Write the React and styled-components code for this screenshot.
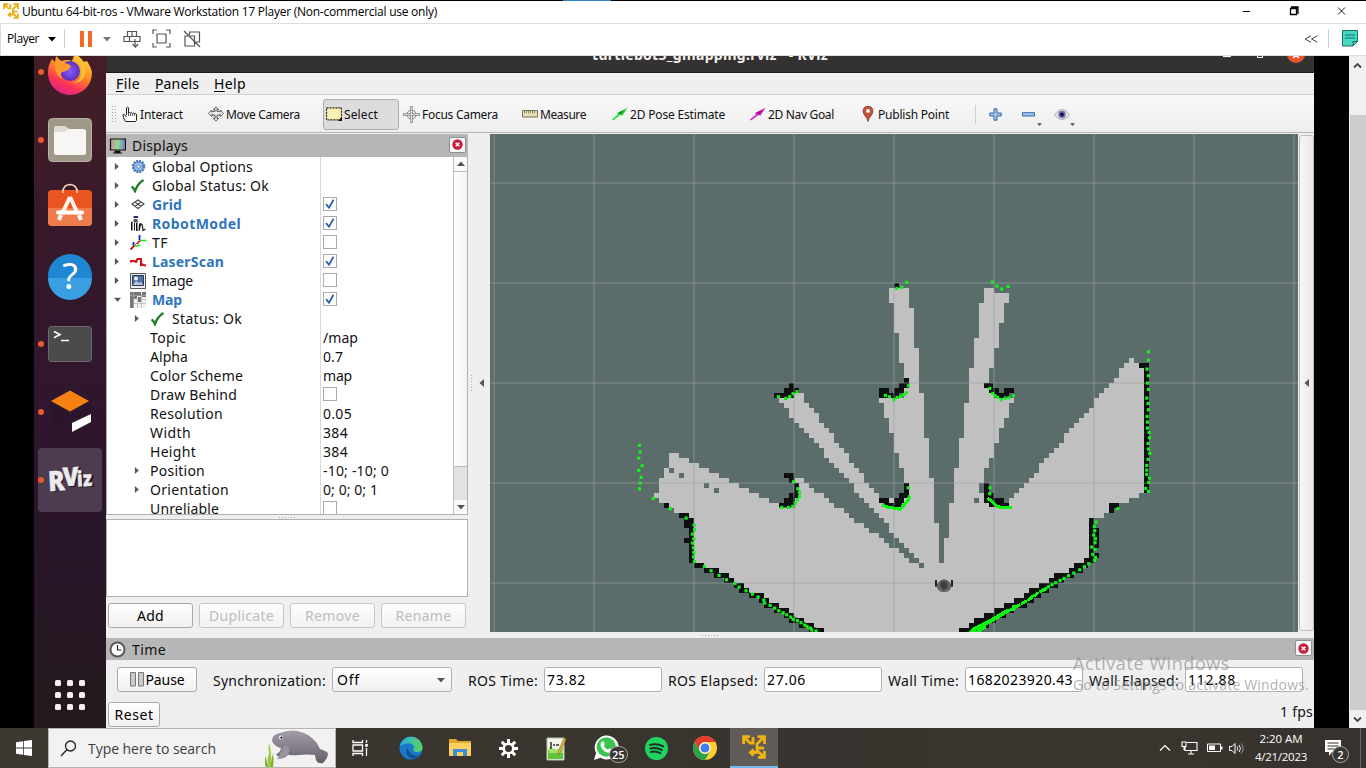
import React, { useLayoutEffect, useRef } from 'react';
import styled, { createGlobalStyle, css } from 'styled-components';

const Global = createGlobalStyle`
  * { box-sizing: border-box; }
  body { margin: 0; background: #000; overflow: hidden; }
  svg { display: block; flex: none; }
`;
const uiFont = '"Open Sans", "Noto Sans", sans-serif';
const ubuntuFont = '"Noto Sans", "Open Sans", sans-serif';

/* Text tracked to a given line width */
const FitBox = styled.span`
  display: block;
  flex: none;
  width: ${p => p.$w}px;
  white-space: nowrap;
`;
function Fit({ w, children, ...rest }) {
  const ref = useRef(null);
  useLayoutEffect(() => {
    const el = ref.current;
    el.style.letterSpacing = '0px';
    const natural = el.getBoundingClientRect().width;
    el.style.letterSpacing = `${(w - natural) / el.textContent.length}px`;
  }, [w, children]);
  return <FitBox $w={w} {...rest}><span ref={ref}>{children}</span></FitBox>;
}

/* ---------- Host window ---------- */
const Desktop = styled.div`
  position: relative;
  width: 1366px;
  height: 768px;
  display: flex;
  flex-direction: column;
  overflow: hidden;
  font-family: ${uiFont};
  font-size: 12px;
  color: #000;
`;
const TitleBar = styled.div`
  height: 24px;
  background: #fff;
  border-top: 1px solid #000;
  border-bottom: 1px solid #dcdcdc;
  display: flex;
  align-items: center;
  padding: 0 0 2px 3px;
  gap: 3px;
`;
const Accent = styled.div`
  position: absolute;
  left: 563px;
  top: 0;
  width: 48px;
  height: 1px;
  background: #2f7fc4;
`;
const WindowButtons = styled.div`
  margin-left: auto;
  display: flex;
  gap: 37px;
  padding-right: 20px;
`;
const PlayerBar = styled.div`
  height: 32px;
  background: #fff;
  border-bottom: 1px solid #dcdcdc;
  border-left: 1px solid #dcdcdc;
  display: flex;
  align-items: center;
  padding: 0 0 2px 6px;
`;
const BarRule = styled.i`
  width: 1px;
  height: 19px;
  background: #cfcfcf;
  margin: 0 ${p => p.$r}px 0 ${p => p.$l}px;
`;
const Slot = styled.span`
  width: ${p => p.$w}px;
  flex: none;
  display: flex;
  align-items: center;
  justify-content: center;
  padding-top: ${p => p.$drop || 0}px;
`;
const Spring = styled.span`flex: 1;`;
const Guest = styled.div`
  height: 672px;
  display: flex;
  background: #000;
`;
const LeftMargin = styled.div`width: 34px;`;
const HostScroll = styled.div`
  width: 17px;
  margin-left: auto;
  background: #f0f0f0;
  display: flex;
  flex-direction: column;
  align-items: center;
  padding: 6px 0 5px;
`;
const HostThumb = styled.div`
  width: 16px;
  height: 595px;
  margin-top: 46px;
  margin-bottom: 6px;
  background: #cdcdcd;
`;

/* ---------- Ubuntu dock ---------- */
const Dock = styled.div`
  width: 72px;
  display: flex;
  flex-direction: column;
  align-items: center;
  overflow: hidden;
  background: linear-gradient(#441e26, #33182c 35%, #2f162e 55%, #271627 78%, #241a1d);
`;
const DockItem = styled.div`
  position: relative;
  flex: none;
  width: 64px;
  height: 64px;
  margin-bottom: 4px;
  border-radius: 4px;
  display: flex;
  align-items: center;
  justify-content: center;
  background: ${p => (p.$active ? '#4f3b4f' : 'transparent')};
  svg { overflow: visible; }
  &:first-child { margin-top: -16px; }
`;
const Running = styled.i`
  position: absolute;
  left: 0;
  top: 29px;
  width: 6px;
  height: 6px;
  border-radius: 50%;
  background: #e95a2b;
`;
const AppGrid = styled.div`
  margin: auto 0 18px;
  display: grid;
  grid-template-columns: repeat(3, 6px);
  gap: 6px;
  i { width: 6px; height: 6px; border-radius: 1.5px; background: #f3eff2; }
`;

/* ---------- RViz ---------- */
const Rviz = styled.div`
  width: 1208px;
  background: #efefef;
  display: flex;
  flex-direction: column;
  font-family: ${ubuntuFont};
  font-size: 14px;
  color: #111;
`;
const RvizTitle = styled.div`
  position: relative;
  height: 17px;
  background: #343132;
  border-bottom: 1px solid #1d1b1b;
  overflow: hidden;
  color: #f4f2f0;
  font-weight: 700;
  font-size: 14px;
  display: flex;
  line-height: 18px;
  padding-left: 486px;
  > * { margin-top: -10px; }
`;
const RvizTitleButtons = styled.div`
  && { margin: 0 9px 0 auto; }
`;
const MenuBar = styled.div`
  height: 22px;
  border-bottom: 1px solid #d0d0d0;
  display: flex;
  align-items: center;
  gap: 15px;
  padding-left: 10px;
  color: #000;
  u { text-underline-offset: 2px; }
`;
const ToolBar = styled.div`
  height: 38px;
  border-bottom: 1px solid #b5b5b5;
  background: linear-gradient(#f9f9f9, #eeeeee);
  display: flex;
  align-items: center;
  padding: 1px 0 0 5px;
  font-size: 12px;
`;
const Tool = styled.div`
  width: ${p => p.$w}px;
  height: 31px;
  display: flex;
  align-items: center;
  gap: 2px;
  padding-left: ${p => p.$pad || 0}px;
  ${p => p.$active && css`
    background: #dcdcdc;
    border: 1px solid #adadad;
    border-radius: 3px;
    padding-left: 2px;
  `}
`;
const ToolSep = styled.i`
  width: 1px;
  height: 19px;
  background: #cfcfcf;
`;
const Grip = styled.i`
  flex: none;
  width: ${p => p.$w}px;
  height: ${p => p.$h}px;
  background-image: radial-gradient(circle, #aaa 0.6px, transparent 0.9px);
  background-size: 3px 3px;
`;
const Work = styled.div`
  height: 499px;
  display: flex;
  padding-top: 1px;
`;
const DockPanel = styled.div`
  width: 362px;
  display: flex;
  flex-direction: column;
`;
const PanelHead = styled.div`
  height: ${p => p.$h}px;
  background: #b6b6b6;
  display: flex;
  align-items: center;
  gap: 6px;
  padding: 0 2px 0 3px;
  flex: none;
`;
const CloseBox = styled.div`
  margin: 0 0 2px auto;
  width: 17px;
  height: 16px;
  border: 1px solid #8f8f8f;
  border-radius: 2px;
  background: #f7f7f7;
  display: flex;
  align-items: center;
  justify-content: center;
`;
const TreeFrame = styled.div`
  height: 358px;
  background: #fff;
  border: 1px solid #b3aeb2;
  border-top: 0;
  display: flex;
  overflow: hidden;
`;
const Rows = styled.div`flex: 1;`;
const Row = styled.div`
  height: 19px;
  display: flex;
`;
const NameCell = styled.div`
  width: 214px;
  border-right: 1px solid #d9d9d9;
  display: flex;
  align-items: center;
  padding-left: ${p => p.$depth * 20}px;
  ${p => p.$on && css`
    color: #2f75bd;
    font-weight: 700;
  `}
  > ${FitBox} { margin-left: 3px; }
`;
const ValueCell = styled.div`
  display: flex;
  align-items: center;
  padding-left: 2px;
`;
const Check = styled.span`
  width: 14px;
  height: 14px;
  margin-bottom: 2px;
  border: 1px solid #aaa;
  background: #fff;
  display: flex;
  align-items: center;
  justify-content: center;
`;
const TreeScroll = styled.div`
  width: 14px;
  border-left: 1px solid #bcbcbc;
  background: #e2e2e2;
  display: flex;
  flex-direction: column;
`;
const ScrollEnd = styled.div`
  height: 14px;
  background: #fafafa;
  display: flex;
  align-items: center;
  justify-content: center;
`;
const ScrollHandle = styled.div`
  height: 297px;
  margin-bottom: 33px;
  background: linear-gradient(90deg, #fff, #f3f3f3);
  border: solid #bcbcbc;
  border-width: 1px 0;
`;
const Splitter = styled.div`
  height: ${p => p.$h}px;
  flex: none;
  display: flex;
  align-items: center;
  justify-content: center;
`;
const Describe = styled.div`
  height: 78px;
  background: #fff;
  border: 1px solid #b3aeb2;
`;
const Buttons = styled.div`
  display: flex;
  gap: 6px;
  padding: 6px 2px 0;
`;
const Button = styled.div`
  width: ${p => p.$w}px;
  height: 25px;
  border: 1px solid ${p => (p.$off ? '#c6c6c6' : '#a9a9a9')};
  border-radius: 3px;
  background: linear-gradient(#fefefe, #f1f1f1);
  color: ${p => (p.$off ? '#bdbdbd' : '#000')};
  display: flex;
  align-items: center;
  justify-content: center;
  gap: 2px;
  flex: none;
`;
const Collapse = styled.div`
  width: ${p => p.$w}px;
  display: flex;
  align-items: center;
  justify-content: space-between;
  padding: 0 4px 0 2px;
`;
const RightStrip = styled.div`
  width: 15px;
  margin: 1px 0 0 1px;
  height: 496px;
  border: 1px solid #bdbdbd;
  border-radius: 3px;
  background: linear-gradient(90deg, #f6f6f6, #e9e9e9);
  display: flex;
  align-items: center;
  justify-content: center;
`;
const TimeRow = styled.div`
  height: 40px;
  display: flex;
  align-items: center;
  padding: 0 0 1px 11px;
`;
const TimeLabel = styled.div`
  margin-left: ${p => p.$l}px;
  margin-right: 6px;
  padding-top: 2px;
`;
const Field = styled.div`
  width: ${p => p.$w}px;
  height: 25px;
  border: 1px solid #b0b0b0;
  border-radius: 3px;
  background: ${p => (p.$combo ? 'linear-gradient(#fefefe, #f0f0f0)' : '#fff')};
  display: flex;
  align-items: center;
  justify-content: space-between;
  padding: 0 6px 0 ${p => (p.$combo ? 4 : 2)}px;
  flex: none;
  color: #000;
`;
const StatusRow = styled.div`
  height: 28px;
  display: flex;
  align-items: center;
  justify-content: space-between;
  padding: 0 1px 0 2px;
  > ${FitBox} { margin-bottom: 6px; }
`;
const Watermark = styled.div`
  position: absolute;
  left: 1073px;
  top: 652px;
  color: rgba(140, 140, 140, 0.68);
  font-size: 18px;
  line-height: 22px;
  div { font-size: 14px; }
`;

/* ---------- Taskbar ---------- */
const Taskbar = styled.div`
  height: 40px;
  background: linear-gradient(90deg, #3c382f, #38332e 60%, #3a352d 80%, #37322e);
  display: flex;
  align-items: center;
  color: #fff;
`;
const Search = styled.div`
  width: 288px;
  height: 40px;
  background: #f2f2f2;
  border: 1px solid #b6b4b0;
  display: flex;
  align-items: center;
  padding: 0 6px 0 11px;
  gap: 11px;
  color: #3d3d3d;
  font-size: 14px;
`;
const Task = styled.div`
  position: relative;
  width: ${p => p.$w || 48}px;
  height: 40px;
  display: flex;
  align-items: center;
  justify-content: center;
  ${p => p.$active && css`
    background: #5f5b57;
    border-bottom: 2px solid #76b9ed;
  `}
`;
const Badge = styled.span`
  position: absolute;
  left: ${p => p.$x}px;
  top: ${p => p.$y}px;
  min-width: 17px;
  height: 17px;
  padding: 0 2px;
  border: 1px solid #a9a7a4;
  border-radius: 9px;
  background: #3a3733;
  font-size: 11px;
  font-weight: 600;
  line-height: 15px;
  text-align: center;
`;
const Tray = styled.div`
  margin-left: auto;
  display: flex;
  align-items: center;
  height: 40px;
  border-right: 1px solid #6b6864;
  margin-right: 5px;
`;
const Clock = styled.div`
  width: 66px;
  display: flex;
  flex-direction: column;
  align-items: center;
  line-height: 18px;
  font-size: 11.5px;
`;

/* ---------- Icons ---------- */
const VmLogo = ({ s = 16, c = '#e8b013' }) => (
  <svg width={s} height={s} viewBox="0 0 24 24" fill="none" stroke={c} strokeWidth="2.800">
    <path d="M1.600 9V1.600H8M1.600 1.600L8 8h4.500M11 2v6M15.500 1.600h7V9M22.400 1.600L15 9v4h7M22.400 16v6.400H16M22.400 22.400L15 15.500V13M8.500 17.500h7M11.500 14.500l-3 3 3 3" />
  </svg>
);
const Tri = ({ dir = 'down', s = 7, c = '#555' }) => {
  const d = { down: 'M0 2h8L4 6.500z', up: 'M0 6h8L4 1.500z', right: 'M1 0v8l4.500-4z', left: 'M6 0v8L1.500 4z' }[dir];
  return <svg width={s} height={s} viewBox="0 0 8 8"><path d={d} fill={c} /></svg>;
};
const CloseDot = () => (
  <svg width="11" height="11" viewBox="0 0 11 11"><circle cx="5.500" cy="5.500" r="5.200" fill="#c5203f" /><path d="M3.700 3.700l3.600 3.600M7.300 3.700L3.700 7.300" stroke="#fff" strokeWidth="1.400" /></svg>
);
const CheckMark = () => (
  <svg width="10" height="10" viewBox="0 0 10 10"><path d="M1 5.200l3 3.500L8.500.7" fill="none" stroke="#2b63a8" strokeWidth="1.800" /></svg>
);

const treeIcons = {
  gear: <svg width="15" height="15" viewBox="0 0 16 16"><circle cx="8" cy="8" r="6" fill="#8fb2de" stroke="#4a78b5" strokeWidth="2.500" strokeDasharray="2 1.140" /><circle cx="8" cy="8" r="4.600" fill="#a9c5e8" stroke="#4f7db8" strokeWidth=".8" /><path d="M8 4v8M4 8h8" stroke="#6e97cb" /><circle cx="8" cy="8" r="1.800" fill="#fff" stroke="#4f7db8" /></svg>,
  ok: <svg width="16" height="14" viewBox="0 0 16 14"><path d="M1.500 7.500q2 1 3.500 4.500Q8 4 13.500 1" fill="none" stroke="#237a2b" strokeWidth="2.300" /></svg>,
  grid: <svg width="14" height="11" viewBox="0 0 14 11"><path d="M7 1l6 4-6 4.500L1 5zM4 3l6 4.500M10 3L4 7.500" fill="none" stroke="#444" strokeWidth="1.100" /></svg>,
  robot: <svg width="16" height="16" viewBox="0 0 16 16"><path d="M3.500 0h4.500v2H3.500z" fill="#2c2c66" /><path d="M3.500 3.500q2-1.500 4 0l.5 3H3.500z" fill="#555" /><path d="M1 6l1.500-.5v9H1zM4 7h1v7.500H4zM6 7h1.500v8H6zM9 8l1.500-1.500.5 2.500-1.500 6H8.500z" fill="#111" /><path d="M11 8q1.500 0 1.500 3l.5 3.500 2.500-1.500" stroke="#222" fill="none" strokeWidth="1.300" /></svg>,
  tf: <svg width="17" height="16" viewBox="0 0 17 16" fill="none" strokeWidth="1.500"><path d="M9.500 0v5M3.500 7v4" stroke="#1c1cd0" strokeWidth="1.800" /><path d="M10 5.500h6.500M4 11h4l2-1" stroke="#2be32b" strokeWidth="1.600" /><path d="M10 5.500L7 9M4 11L.5 14.500" stroke="#d31313" strokeWidth="1.800" /><path d="M9 6L4.500 10.500" stroke="#a52" strokeWidth="1" /></svg>,
  laser: <svg width="17" height="12" viewBox="0 0 17 12"><path d="M1 6.500V5h3l2 1 1.500-3h3.500v7l1-2 1.500 1 2.500.5" fill="none" stroke="#d10f12" strokeWidth="2" /></svg>,
  image: <svg width="16" height="16" viewBox="0 0 16 16"><path d="M.5.5h15v15H.5z" fill="#eee" stroke="#555" /><path d="M2.500 2.500h11v10h-11z" fill="#5471a3" stroke="#26375b" /><path d="M3 12l3-4 3 2 2-1 2 3z" fill="#b8c8dc" /><circle cx="6" cy="5.500" r="2" fill="#e9eef7" /></svg>,
  map: <svg width="16" height="16" viewBox="0 0 16 16" shapeRendering="crispEdges"><path d="M0 0h16v16H0z" fill="#f0f0f0" /><path d="M4 11h12M7 7v9M11 3v13M7 7h9" stroke="#c4c4c4" fill="none" /><path d="M0 0h11v3H0zM0 3h7v4H0zM12 0h4v5h-4zM0 7h4v9H0zM8 5h3v5H8z" fill="#777" /><path d="M0 3h16M3.500 0v16" stroke="#999" fill="none" /></svg>,
};

const toolIcons = {
  interact: <svg width="16" height="16" viewBox="0 0 16 16"><path d="M4.500 9V1.800q1-1.300 2 0V7q1-1 2 0 1-.7 2 .3 1-.7 2 .3 1.500-.5 2 .7v6l-1 1.200H3.500L2 13 .8 8.800q1-1.200 2 .2l1.700 2" fill="#fff" stroke="#222" strokeWidth="1" /><path d="M6.500 7v3M8.500 7.500v2.500M10.500 8v2M12.500 8v2" stroke="#333" strokeWidth=".8" /></svg>,
  move: <svg width="16" height="16" viewBox="0 0 16 16" fill="#eee" stroke="#555" strokeWidth=".9"><path d="M8 .8l2.500 2.700H9v2h3.500V4l3 3.500-3 3V9H9v3.500h1.500L8 15.200 5.500 12.500H7V9H3.500v1.500l-3-3 3-3.500v1.500H7v-2H5.500z" /><circle cx="8" cy="7.500" r="4" fill="none" strokeDasharray="1 1" /></svg>,
  select: <svg width="16" height="14" viewBox="0 0 16 14"><path d="M.5.8h15v12H.5z" fill="#f8efb2" stroke="#222" strokeWidth="1.200" strokeDasharray="2 1" /><path d="M16 9.500V14h-4z" fill="#111" /></svg>,
  focus: <svg width="17" height="17" viewBox="0 0 17 17" fill="none" stroke="#777" strokeWidth="1"><circle cx="8.500" cy="8.500" r="4.500" /><circle cx="8.500" cy="8.500" r="2" /><path d="M8.500 0v17M0 8.500h17" strokeWidth="2.400" stroke="#888" /><path d="M8.500 1v15M1 8.500h15" stroke="#eee" strokeWidth=".8" /></svg>,
  measure: <svg width="16" height="8" viewBox="0 0 16 8"><path d="M.5.5h15v6.500H.5z" fill="#e5dfb2" stroke="#777357" /><path d="M2.500 1v2.500M4.500 1v2M6.500 1v2.500M8.500 1v2M10.500 1v2.500M12.500 1v2" stroke="#777357" strokeWidth=".8" /></svg>,
  pose: <svg width="16" height="14" viewBox="0 0 16 14"><path d="M0 12.500l6-5-1-1.500L15.500.8 10.500 8.500 8.500 8 1 13.500z" fill="#25dd35" /><path d="M6 6L12 3 9.500 7.500z" fill="#178b29" /></svg>,
  goal: <svg width="16" height="14" viewBox="0 0 16 14"><path d="M0 12.500l6-5-1-1.500L15.500.8 10.500 8.500 8.500 8 1 13.500z" fill="#d81ec0" /><path d="M6 6L12 3 9.500 7.500z" fill="#991387" /></svg>,
  pin: <svg width="16" height="16" viewBox="0 0 16 16"><path d="M8 15.700C7.500 11.500 3 9 3 5a5 5 0 0110 0c0 4-4.500 6.500-5 10.700z" fill="#c25339" stroke="#7b3526" strokeWidth=".7" /><circle cx="8" cy="5" r="1.900" fill="#fff" /></svg>,
  plus: <svg width="13" height="13" viewBox="0 0 13 13"><path d="M5 .8h3V5h4.200v3H8v4.200H5V8H.8V5H5z" fill="#9cc5ee" stroke="#3a66a5" /></svg>,
  minus: <svg width="13" height="5" viewBox="0 0 13 5"><path d="M.5.700h12v3.300H.5z" fill="#9cc5ee" stroke="#3a66a5" /></svg>,
  eye: <svg width="16" height="11" viewBox="0 0 16 11"><path d="M.5 6Q4 .5 8 .5T15.500 6Q12 10.500 8 10.500T.5 6z" fill="#e8e8ec" stroke="#aaa" /><circle cx="8" cy="5.500" r="3.700" fill="#6b74b0" /><circle cx="8" cy="5.500" r="1.900" fill="#151530" /></svg>,
};

const Firefox = () => (
  <svg width="46" height="46" viewBox="0 0 46 46">
    <defs>
      <linearGradient id="ff" x1=".8" y1="0" x2=".3" y2="1"><stop offset="0" stopColor="#ffe23f" /><stop offset=".45" stopColor="#ff8a25" /><stop offset=".75" stopColor="#fb3555" /><stop offset="1" stopColor="#e01f8e" /></linearGradient>
      <radialGradient id="ffp"><stop offset="0" stopColor="#8a5cff" /><stop offset="1" stopColor="#5a32b8" /></radialGradient>
    </defs>
    <path d="M5 10l3 3 1-6 5 5q7-2 11 0l3-8q6 5 9 9l3-1q5 8 5 12a22 22 0 11-44 0q0-8 4-14z" fill="url(#ff)" />
    <circle cx="23" cy="22" r="10" fill="url(#ffp)" />
    <path d="M8 13q7-3 10 1 4 1 6 3-2 5-9 6-3 3 1 7-9-3-8-17z" fill="#ff9a2c" />
    <path d="M29 11q7 6 5 14-1 8-9 9 13 0 14-13 0-6-10-10z" fill="#ffbd32" />
  </svg>
);
const dockIcons = {
  firefox: <Firefox />,
  files: <svg width="44" height="44" viewBox="0 0 44 44"><rect x=".5" y=".5" width="43" height="43" rx="4" fill="#9f9787" stroke="#b9b3a6" /><rect x="6" y="11" width="32" height="26" rx="2.500" fill="#f7f6f5" /><path d="M6 14v-3q0-3 2-3h8q2 0 3 1.500l2 1.500h-1l-3 3z" fill="#e0dcd4" /></svg>,
  software: <svg width="44" height="44" viewBox="0 2 44 44"><path d="M15 8q0-7 7-7.500Q29 1 29 8" fill="none" stroke="#f7d2b4" strokeWidth="1.600" /><rect y="6" width="44" height="36" rx="4" fill="#e95420" /><path d="M0 24h44v14q0 4-4 4H4q-4 0-4-4z" fill="#f07c4c" /><path d="M22 13l-8 17M22 13l8 17" stroke="#fff3ea" strokeWidth="4" /><path d="M10 28.500h24" stroke="#fff" strokeWidth="4" strokeLinecap="round" /><path d="M13 31l-2 5M31 31l2 5" stroke="#fff" strokeWidth="4" /><path d="M15 5v4M29 5v4" stroke="#f7d2b4" strokeWidth="1.600" /></svg>,
  help: <svg width="44" height="44" viewBox="0 0 44 44"><circle cx="22" cy="22" r="22" fill="#1f86d3" /><path d="M0 24h44a22 22 0 01-44 0z" fill="#3a9fe2" /><text x="22" y="35" textAnchor="middle" fontFamily="Noto Sans, sans-serif" fontSize="36" fill="#fff">?</text></svg>,
  terminal: <svg width="44" height="36" viewBox="0 0 44 36"><rect x=".5" y=".5" width="43" height="35" rx="3" fill="#4b4b4b" stroke="#6d6970" /><path d="M6 5.500l6 3-6 3.200M13 14.500h8" fill="none" stroke="#fff" strokeWidth="1.600" /></svg>,
  gazebo: <svg width="44" height="48" viewBox="0 0 44 48"><path d="M22 2.500l19 10.500L22 23.500 3 13z" fill="#f58113" /><path d="M3 15l19 10v18L4 35zM23 26l20-11v8L23 34z" fill="#2a162b" /><path d="M24 35l19-9v8L24 44z" fill="#fff" /></svg>,
  rviz: <svg width="50" height="40" viewBox="0 0 50 40"><g fontFamily="Open Sans, sans-serif" fontWeight="800" transform="rotate(-3 25 20)"><g fill="#1d151d"><text x="4" y="31" fontSize="28" textLength="17" lengthAdjust="spacingAndGlyphs">R</text><text x="19" y="27" fontSize="26" textLength="17" lengthAdjust="spacingAndGlyphs">V</text><text x="33" y="28" fontSize="21" textLength="16" lengthAdjust="spacingAndGlyphs">iz</text></g><g fill="#eceaec" stroke="#eceaec" strokeWidth=".3"><text x="3" y="30" fontSize="28" textLength="17" lengthAdjust="spacingAndGlyphs">R</text><text x="18" y="26" fontSize="26" textLength="16" lengthAdjust="spacingAndGlyphs">V</text><text x="32" y="27" fontSize="21" textLength="15" lengthAdjust="spacingAndGlyphs">iz</text></g></g></svg>,
};

/* ---------- Occupancy map ---------- */
/* One unit is a third of a pixel, one map cell is 15 units. */
const leftFree = 'M117 549H147V564H177V579H207V594H237V609H267V624H297V639H327V654H357V669H387V684H417V699H447V714H495V624H522V639H537V654H552V669H582V684H597V699H612V714H642V729H657V744H672V759H702V774H717V789H747V804H762V819H777V834H807V849H822V864H837V879H867V894H882V879H867V864H852V849H837V834H822V819H807V804H792V789H777V759H762V744H747V729H732V714H717V699H702V684H687V669H672V639H657V624H642V609H627V594H612V579H597V564H582V534H567V519H552V504H537V489H522V474H507V459H492V444H477V414H462V399H447V384H492V369H522V399H537V414H552V429H567V459H582V474H597V489H612V519H627V534H642V549H657V579H672V594H687V609H702V639H717V654H732V669H747V699H900V1086H582L192 879V744H162V729H132V714H102V699H87V684H72V669H87V624H102V594H117z';
const rightFree = 'M87 54H147V114H162V234H177V369H192V504H207V624H222V759H237V879H252V804H267V699H282V594H297V504H312V399H327V294H342V204H357V99H372V54H402V69H447V99H432V159H417V234H402V294H387V354H402V369H432V384H462V399H447V444H432V474H417V519H402V564H387V594H372V639H357V669H372V699H447V684H462V669H477V654H492V639H507V624H522V609H537V579H552V564H567V549H582V534H597V519H612V489H627V474H642V459H657V444H672V429H687V414H702V384H717V369H732V354H747V339H762V324H777V294H792V279H807V264H822V279H867V669H837V684H807V699H762V729H747V729H732V744H702V864L330 1086H195V699H72V684H102V699H117V669H132V594H117V549H102V489H87V444H72V399H57V384H132V279H117V189H102V99H87z';
const leftWalls = [
  [432, 369, 60, 15], [462, 354, 45, 15], [477, 339, 15, 15], [462, 369, 30, 15],
  [462, 609, 30, 15], [477, 624, 15, 15], [492, 639, 15, 45], [477, 669, 18, 30], [462, 684, 30, 15], [447, 699, 45, 12],
  [102, 699, 15, 15], [147, 729, 30, 15], [162, 744, 30, 30], [177, 774, 15, 105], [162, 804, 15, 15],
  [192, 879, 30, 15], [222, 894, 45, 15], [252, 909, 45, 15], [282, 924, 30, 15], [312, 939, 30, 15], [327, 954, 30, 15],
  [357, 969, 45, 15], [387, 984, 30, 15], [402, 999, 45, 15], [432, 1014, 45, 15], [462, 1029, 30, 15], [477, 1044, 45, 15],
  [507, 1059, 45, 15], [537, 1074, 45, 15],
];
const rightWalls = [
  [102, 39, 15, 15], [132, 324, 15, 15], [117, 339, 30, 15], [57, 354, 30, 30], [102, 354, 30, 15], [87, 369, 30, 15],
  [372, 339, 27, 15], [387, 354, 30, 15], [432, 354, 30, 15], [402, 369, 45, 15],
  [132, 639, 15, 45], [117, 669, 30, 15], [57, 684, 30, 15], [102, 684, 30, 15], [72, 699, 54, 12],
  [372, 639, 15, 60], [387, 669, 15, 30], [402, 684, 30, 15], [387, 699, 60, 12],
  [837, 279, 30, 15], [852, 294, 15, 375], [747, 699, 30, 15], [747, 714, 15, 15],
  [687, 744, 15, 120], [702, 774, 15, 60], [702, 849, 15, 15], [672, 864, 33, 15], [642, 879, 42, 15], [627, 894, 42, 15],
  [582, 909, 60, 15], [567, 924, 45, 15], [537, 939, 57, 15], [507, 954, 60, 15], [492, 969, 50, 15], [462, 984, 60, 15],
  [432, 999, 70, 15], [402, 1014, 60, 15], [372, 1029, 66, 15], [342, 1044, 66, 15], [327, 1059, 60, 15], [297, 1074, 60, 12],
];
const leftHits = [[28,526],[30,546],[26,564],[36,587],[26,601],[33,622],[30,639],[28,656],[69,685],[120,716],[168,744],[445,380],[467,385],[479,380],[489,371],[501,365],[490,635],[503,656],[508,667],[508,679],[502,689],[496,699],[488,709],[475,712],[455,712],[192,765],[193,779],[187,792],[191,806],[187,819],[190,833],[191,847],[190,860],[193,874],[223,889],[243,902],[267,916],[289,929],[315,940],[327,951],[348,962],[367,972],[384,981],[401,990],[404,999],[420,1006],[434,1014],[446,1022],[459,1028],[470,1034],[482,1041],[489,1048],[502,1052],[513,1058],[524,1065],[531,1070],[541,1074],[545,1080],[558,1083]];
const rightHits = [[110,55],[125,52],[140,37],[145,347],[139,368],[131,374],[122,379],[111,382],[101,389],[88,380],[76,376],[397,36],[411,48],[425,57],[444,49],[389,355],[398,370],[405,377],[412,382],[423,389],[435,384],[446,383],[460,377],[144,653],[390,653],[389,671],[865,245],[865,270],[861,297],[865,317],[862,339],[865,358],[860,384],[864,400],[865,419],[861,439],[862,456],[862,474],[867,487],[868,503],[864,520],[865,537],[869,550],[864,568],[860,586],[860,600],[860,613],[868,624],[866,637],[857,655],[865,664],[773,716],[708,756],[703,769],[704,782],[701,795],[706,806],[705,818],[695,831],[705,838],[698,853],[706,862],[704,871],[686,881],[673,890],[659,899],[641,909],[625,917],[612,925],[600,931],[587,938],[576,944],[565,950],[557,956],[549,960]];
const gridX = [-1098, -798, -498, -198, 102, 402, 702, 1002, 1302];
const gridY = [-261, 39, 339, 639, 939];
const Cells = ({ list }) => list.map(([x, y, w, h], i) => <rect key={i} x={x} y={y} width={w} height={h} fill="#0d100f" />);
const Hits = ({ list }) => list.map(([x, y], i) => <rect key={i} x={x - 4.5} y={y - 4.5} width="9.500" height="9.500" fill="#14f01c" />);

const MapView = () => (
  <svg width="808" height="498" viewBox="-1110 -408 2424 1494">
    <rect x="-1110" y="-408" width="2424" height="1494" fill="#5b6d6a" />
    <g shapeRendering="crispEdges">
      <g transform="translate(-690 0)"><path d={leftFree} fill="#c0c0c0" /></g>
      <path d={rightFree} fill="#c0c0c0" />
      <g transform="translate(-690 0)">
        <path d="M117 594h15v15h-15zM147 609h15v15h-15zM222 639h15v15h-15zM252 654h15v15h-15z" fill="#5b6d6a" />
        <Cells list={leftWalls} />
      </g>
      <path d="M342 684h15v15h-15z" fill="#5b6d6a" />
      <Cells list={rightWalls} />
      <g stroke="rgba(160,160,164,.3)" strokeWidth="6">
        {gridX.map(x => <path key={x} d={`M${x} -408V1086`} />)}
        {gridY.map(y => <path key={y} d={`M-1110 ${y}H1314`} />)}
      </g>
    </g>
    <g transform="translate(-690 0)"><Hits list={leftHits} /></g>
    <Hits list={rightHits} />
    <g fill="none" stroke="#0cf70f" strokeWidth="9" shapeRendering="crispEdges">
      <path d="M66 704l19 8 20 3 15 3 13-14 12-14 4-14M383 684l17 14 12 12 18 3h25" />
      <path d="M556 957l-22 12-23 17-28 16-27 15-30 15" strokeDasharray="20 2" />
      <path d="M445 1021l-50 30-55 28" strokeWidth="12" />
      <path d="M520 976l-10 12M459 1006v16M340 1076l-8 10h20l25-16" strokeWidth="9" />
    </g>
    <path d="M225 930h6v20h-6zM273 930h6v20h-6z" fill="#222" />
    <circle cx="246" cy="949" r="16" fill="#6a6a6a" /><circle cx="258" cy="949" r="16" fill="#606060" /><circle cx="252" cy="947" r="19" fill="#666" />
    <circle cx="252" cy="944" r="12" fill="#4b4b4b" /><path d="M243 940l12-4 6 20-13 4z" fill="#3e3e3e" />
  </svg>
);

/* ---------- Data ---------- */
const tree = [
  { t: 'Global Options', w: 101, icon: 'gear', arrow: 'right' },
  { t: 'Global Status: Ok', w: 117, icon: 'ok', arrow: 'right' },
  { t: 'Grid', w: 30, icon: 'grid', arrow: 'right', on: true, check: 1 },
  { t: 'RobotModel', w: 89, icon: 'robot', arrow: 'right', on: true, check: 1 },
  { t: 'TF', w: 16, icon: 'tf', arrow: 'right', check: 0 },
  { t: 'LaserScan', w: 72, icon: 'laser', arrow: 'right', on: true, check: 1 },
  { t: 'Image', w: 41, icon: 'image', arrow: 'right', check: 0 },
  { t: 'Map', w: 30, icon: 'map', arrow: 'down', on: true, check: 1 },
  { t: 'Status: Ok', w: 70, icon: 'ok', arrow: 'right', depth: 1 },
  { t: 'Topic', w: 36, depth: 1, v: '/map', vw: 35 },
  { t: 'Alpha', w: 38, depth: 1, v: '0.7', vw: 20 },
  { t: 'Color Scheme', w: 93, depth: 1, v: 'map', vw: 29 },
  { t: 'Draw Behind', w: 87, depth: 1, check: 0 },
  { t: 'Resolution', w: 73, depth: 1, v: '0.05', vw: 29 },
  { t: 'Width', w: 41, depth: 1, v: '384', vw: 25 },
  { t: 'Height', w: 46, depth: 1, v: '384', vw: 25 },
  { t: 'Position', w: 55, depth: 1, arrow: 'right', v: '-10; -10; 0', vw: 66 },
  { t: 'Orientation', w: 79, depth: 1, arrow: 'right', v: '0; 0; 0; 1', vw: 55 },
  { t: 'Unreliable', w: 69, depth: 1, check: 0 },
];
const tools = [
  ['interact', 'Interact', 43, 86], ['move', 'Move Camera', 74, 115], ['select', 'Select', 34, 76, 'on'],
  ['focus', 'Focus Camera', 76, 123, 0, 4], ['measure', 'Measure', 46, 90], ['pose', '2D Pose Estimate', 95, 138],
  ['goal', '2D Nav Goal', 66, 110], ['pin', 'Publish Point', 71, 115],
];
const clocks = [
  ['ROS Time:', 70, 16, '73.82', 39], ['ROS Elapsed:', 90, 6, '27.06', 39],
  ['Wall Time:', 71, 6, '1682023920.43', 105], ['Wall Elapsed:', 90, 6, '112.88', 48],
];
const dock = [['firefox', 1], ['files', 1], ['software', 0], ['help', 0], ['terminal', 1], ['gazebo', 1], ['rviz', 1]];

const Manatee = () => (
  <svg width="64" height="38" viewBox="0 0 64 38">
    <defs><linearGradient id="mn" x1="0" y1="0" x2="0" y2="1"><stop offset="0" stopColor="#a49ca8" /><stop offset=".6" stopColor="#807885" /><stop offset="1" stopColor="#625b68" /></linearGradient></defs>
    <path d="M7 12Q7 5 15 4q14-6 28 2 9 6 12 14 6 2 8 4 0 5-5 10-5 1-7-3-1-3-1-5-8-1-16 0-9 1-13-1-1 3-4 3-5 0-6-3 4-1 5-6-6-1-9-7z" fill="url(#mn)" />
    <path d="M20 16q6 2 4 8t-12 6q3-3 4-8z" fill="#9a929f" />
    <circle cx="16" cy="8.500" r="1.900" fill="#fff" /><circle cx="16.400" cy="8.700" r="1.100" fill="#111" />
    <path d="M4 38q-3-7 0-13-1-6 0-11 2 6 2 12l1 12z" fill="#9cc83c" /><path d="M1 38q-3-5 0-11 0 6 3 11zM6 38q0-6 2-14 1 8 0 14z" fill="#7eb02d" />
  </svg>
);

export default function App() {
  return (
    <Desktop>
      <Global />
      <TitleBar>
        <VmLogo />
        <Fit w={415}>Ubuntu 64-bit-ros - VMware Workstation 17 Player (Non-commercial use only)</Fit>
        <WindowButtons>
          <svg width="10" height="10" viewBox="0 0 10 10"><path d="M1 5.500h7" stroke="#000" /></svg>
          <svg width="10" height="10" viewBox="0 0 10 10" fill="none" stroke="#000"><path d="M1.500 2.500h6v6h-6zM2 1h7v7" strokeWidth="1.300" /></svg>
          <svg width="10" height="10" viewBox="0 0 10 10"><path d="M2 1.500l7 7M9 1.500l-7 7" stroke="#000" strokeWidth=".9" /></svg>
        </WindowButtons>
      </TitleBar>
      <Accent />
      <PlayerBar>
        <Fit w={32}>Player</Fit>
        <Slot $w={25}><Tri s={8} c="#000" /></Slot>
        <BarRule $l={0} $r={12} />
        <Slot $w={17}><svg width="12" height="16" viewBox="0 0 12 16"><path d="M0 0h4v16H0zM8 0h4v16H8z" fill="#f26a21" /></svg></Slot>
        <Slot $w={26}><Tri s={8} c="#777" /></Slot>
        <Slot $w={24}><svg width="18" height="18" viewBox="0 0 18 18" fill="none" stroke="#555" strokeWidth="1.200"><path d="M4.500 1.500h9v5h-9zM9 1.500v5M1 6.500h16v5H1zM6.500 6.500v5M12 9v7M9.500 14l3 3 2.500-3" /></svg></Slot>
        <Slot $w={35}><svg width="19" height="19" viewBox="0 0 19 19" fill="none" stroke="#555" strokeWidth="1.200"><path d="M5 5h9v9H5zM1 5V1h4M14 1h4v4M18 14v4h-4M5 18H1v-4" /></svg></Slot>
        <Slot $w={26}><svg width="18" height="18" viewBox="0 0 18 18" fill="none" stroke="#555" strokeWidth="1.200"><path d="M6.500 5V2h10v10h-4M2 6h9.500v10H2zM1 1l16 16" /></svg></Slot>
        <Spring />
        <svg width="14" height="8" viewBox="0 0 14 8" fill="none" stroke="#444"><path d="M7 .8L1 4l6 3.200M13.500.8L7.500 4l6 3.200" /></svg>
        <BarRule $l={10} $r={13} />
        <svg width="16" height="17" viewBox="0 0 16 17"><path d="M.5.500h15v11l-4.500 4.500H.5z" fill="#45d9c4" stroke="#1f6d6b" /><path d="M3 5h10M3 8h10M11 16v-4.500h4.500" fill="none" stroke="#1f6d6b" /></svg>
        <Slot $w={8} />
      </PlayerBar>

      <Guest>
        <LeftMargin />
        <Dock>
          {dock.map(([k, run]) => (
            <DockItem key={k} $active={k === 'rviz'}>{run ? <Running /> : null}{dockIcons[k]}</DockItem>
          ))}
          <AppGrid>{Array.from({ length: 9 }, (_, i) => <i key={i} />)}</AppGrid>
        </Dock>

        <Rviz>
          <RvizTitle>
            <Fit w={236}>turtlebot3_gmapping.rviz* - RViz</Fit>
            <RvizTitleButtons>
              <svg width="82" height="8" viewBox="0 0 82 8"><path d="M0 .5h8" stroke="#fff" strokeWidth="1.200" /><path d="M34.500 0v1.500h5V0" fill="none" stroke="#fff" /><circle cx="73" cy="-2" r="9" fill="#e4552a" /><path d="M70 2l3-3 3 3" stroke="#fff" fill="none" strokeWidth="1.500" /></svg>
            </RvizTitleButtons>
          </RvizTitle>
          <MenuBar>
            <Fit w={24}><u>F</u>ile</Fit><Fit w={44}><u>P</u>anels</Fit><Fit w={32}><u>H</u>elp</Fit>
          </MenuBar>
          <ToolBar>
            <Grip $w={6} $h={18} /><Slot $w={5} />
            {tools.map(([k, t, tw, w, on, pad]) => (
              <Tool key={k} $w={w} $active={on === 'on'} $pad={pad}>{toolIcons[k]}<Fit w={tw}>{t}</Fit></Tool>
            ))}
            <ToolSep />
            <Slot $w={38}>{toolIcons.plus}</Slot>
            <Slot $w={3} />
            <Slot $w={22}>{toolIcons.minus}</Slot>
            <Slot $w={0} $drop={20}><Tri s={5} /></Slot>
            <Slot $w={13} />
            <Slot $w={20}>{toolIcons.eye}</Slot>
            <Slot $w={0} $drop={20}><Tri s={5} /></Slot>
          </ToolBar>

          <Work>
            <DockPanel>
              <PanelHead $h={23}>
                <svg width="17" height="16" viewBox="0 0 17 16"><defs><linearGradient id="mon"><stop offset="0" stopColor="#d88" /><stop offset=".5" stopColor="#8d9" /><stop offset="1" stopColor="#77c" /></linearGradient></defs><path d="M1.500 1h15v11h-15z" fill="url(#mon)" stroke="#111" strokeWidth="1.200" /><path d="M6 13h5v1.500H6zM4 15h9" stroke="#111" fill="#111" /></svg>
                <Fit w={56}>Displays</Fit>
                <CloseBox><CloseDot /></CloseBox>
              </PanelHead>
              <TreeFrame>
                <Rows>
                  {tree.map(r => (
                    <Row key={r.t}>
                      <NameCell $depth={r.depth || 0} $on={r.on}>
                        <Slot $w={20}>{r.arrow && <Tri dir={r.arrow} />}</Slot>
                        {r.icon && <Slot $w={22}>{treeIcons[r.icon]}</Slot>}
                        <Fit w={r.w}>{r.t}</Fit>
                      </NameCell>
                      <ValueCell>
                        {r.check !== undefined && <Check>{r.check ? <CheckMark /> : null}</Check>}
                        {r.v && <Fit w={r.vw}>{r.v}</Fit>}
                      </ValueCell>
                    </Row>
                  ))}
                </Rows>
                <TreeScroll>
                  <ScrollEnd><Tri dir="up" s={8} /></ScrollEnd>
                  <ScrollHandle />
                  <ScrollEnd><Tri s={8} /></ScrollEnd>
                </TreeScroll>
              </TreeFrame>
              <Splitter $h={4}><Grip $w={18} $h={3} /></Splitter>
              <Describe />
              <Buttons>
                <Button $w={85}><Fit w={27}>Add</Fit></Button>
                <Button $w={85} $off><Fit w={65}>Duplicate</Fit></Button>
                <Button $w={85} $off><Fit w={55}>Remove</Fit></Button>
                <Button $w={85} $off><Fit w={56}>Rename</Fit></Button>
              </Buttons>
            </DockPanel>
            <Collapse $w={22}><Grip $w={3} $h={18} /><Tri dir="left" s={8} /></Collapse>
            <MapView />
            <RightStrip><Tri dir="left" s={8} /></RightStrip>
          </Work>
          <Splitter $h={6}><Grip $w={18} $h={3} /></Splitter>

          <PanelHead $h={22}>
            <svg width="17" height="17" viewBox="0 0 17 17"><circle cx="8.500" cy="8.500" r="7" fill="#fff" stroke="#5a5a5a" strokeWidth="2" /><path d="M8.500 4v5h4" fill="none" stroke="#222" strokeWidth="1.200" /></svg>
            <Fit w={34}>Time</Fit>
            <CloseBox><CloseDot /></CloseBox>
          </PanelHead>
          <TimeRow>
            <Button $w={80}>
              <svg width="14" height="15" viewBox="0 0 14 15"><path d="M.5.500h5v13.500h-5zM8.500.500h5v13.500h-5z" fill="#c9c9c9" stroke="#777" /></svg>
              <Fit w={39}>Pause</Fit>
            </Button>
            <TimeLabel $l={16}><Fit w={113}>Synchronization:</Fit></TimeLabel>
            <Field $w={120} $combo><Fit w={23}>Off</Fit><Tri s={8} /></Field>
            {clocks.map(([l, lw, ml, v, vw]) => (
              <React.Fragment key={l}>
                <TimeLabel $l={ml}><Fit w={lw}>{l}</Fit></TimeLabel>
                <Field $w={118}><Fit w={vw}>{v}</Fit></Field>
              </React.Fragment>
            ))}
          </TimeRow>
          <StatusRow>
            <Button $w={52}><Fit w={39}>Reset</Fit></Button>
            <Fit w={33}>1 fps</Fit>
          </StatusRow>
        </Rviz>

        <HostScroll>
          <svg width="9" height="7" viewBox="0 0 9 7"><path d="M1 5.500L4.500 2 8 5.500" fill="none" stroke="#444" strokeWidth="1.800" /></svg>
          <HostThumb />
          <svg width="9" height="7" viewBox="0 0 9 7"><path d="M1 1.500L4.500 5 8 1.500" fill="none" stroke="#444" strokeWidth="1.800" /></svg>
        </HostScroll>
      </Guest>

      <Taskbar>
        <Task $w={48}><svg width="16" height="16" viewBox="0 0 16 16"><path d="M0 2.200l7-1v6.300H0zM7.800 1.100L16 0v7.500H7.800zM0 8.400h7v6.400l-7-1zM7.800 8.400H16V16l-8.200-1.100z" fill="#fff" /></svg></Task>
        <Search>
          <svg width="17" height="17" viewBox="0 0 17 17" fill="none" stroke="#222" strokeWidth="1.300"><circle cx="10.500" cy="6" r="5" /><path d="M7 9.500L1 16" /></svg>
          <Fit w={128}>Type here to search</Fit>
          <Spring />
          <Manatee />
        </Search>
        <Task><svg width="16" height="16" viewBox="0 0 16 16" fill="none" stroke="#fff" strokeWidth="1.300"><path d="M1 0v2.500h9.500V0M1 16v-2.500h9.500V16M1 5h9.500v6H1zM14.500 0v3M14.500 8v8" /><path d="M13.200 4h2.600v2.800h-2.600z" fill="#fff" stroke="none" /></svg></Task>
        <Task $w={53}><svg width="24" height="24" viewBox="0 0 24 24"><defs><linearGradient id="eg"><stop offset="0" stopColor="#27a8e6" /><stop offset="1" stopColor="#5bd45c" /></linearGradient></defs><circle cx="12" cy="12" r="11.500" fill="#1779c9" /><path d="M.8 10A11.500 11.500 0 0123.500 11q.3 5-5 5-4 0-4.500-2 2-2 0-5-4-4-13.200 1z" fill="url(#eg)" /><path d="M9 11q-4 6 1 10 5 4 11-2-5 2-9-1-4-3-3-7z" fill="#124f94" /></svg></Task>
        <Task $w={45}><svg width="22" height="20" viewBox="0 0 22 20"><path d="M0 1h7l2 2h13v6H0z" fill="#e3a52a" /><path d="M0 5h22v13H0z" fill="#fbd25e" /><path d="M4 18v-7h14v7h-4v-4H8v4z" fill="#3f8fd8" /></svg></Task>
        <Task $w={53}><svg width="19" height="19" viewBox="0 0 19 19" fill="none" stroke="#fff"><circle cx="9.500" cy="9.500" r="4.800" strokeWidth="2.600" /><path d="M9.500 0v4M9.500 15v4M0 9.500h4M15 9.500h4M2.800 2.800l2.800 2.800M13.400 13.400l2.800 2.800M2.800 16.200l2.800-2.800M13.400 5.600l2.800-2.800" strokeWidth="3" /></svg></Task>
        <Task $w={44}><svg width="22" height="25" viewBox="0 0 22 25"><path d="M1 2h17v22H1z" fill="#f1f5ea" stroke="#b9c4ab" /><path d="M2 14h15v9H2z" fill="#5fc43c" /><path d="M3 10q6 6 14 1v6H3z" fill="#a6e36c" /><path d="M5 6v7M7 9h2M10 9h3" stroke="#333" strokeWidth="1.500" /><path d="M20 3l-6 14-2 2v-3l6-14z" fill="#e7b23a" stroke="#8a6a20" strokeWidth=".6" /></svg></Task>
        <Task $w={54}><svg width="26" height="26" viewBox="0 0 26 26"><path d="M1 25l2-7a12 12 0 114.500 4.800z" fill="#fff" /><circle cx="13.300" cy="12" r="9.700" fill="#3bc350" /><path d="M9 6.500q2-1 2.500 2 .5 1.500-.8 2.300 1.500 3 4.300 4 1-1.700 2-1.300l2.500 1.300q0 3-3 3.200-6.500-.5-9-7.500-.2-3 1.500-4z" fill="#fff" /></svg><Badge $x={30} $y={18}>25</Badge></Task>
        <Task $w={46}><svg width="23" height="23" viewBox="0 0 24 24"><circle cx="12" cy="12" r="12" fill="#1fd35f" /><path d="M5 8.200q7.500-2 14 1.600M5.500 12q6.500-1.600 12 1.500M6 15.600q5.500-1.300 10 1.300" fill="none" stroke="#22302a" strokeWidth="2" strokeLinecap="round" /></svg></Task>
        <Task $w={51}><svg width="24" height="24" viewBox="0 0 24 24"><circle cx="12" cy="12" r="12" fill="#fdcc2e" /><path d="M1.600 6A12 12 0 0122.400 6H12a6 6 0 00-5.200 9z" fill="#e33b2e" /><path d="M1.600 6A12 12 0 0012 24l5.200-9A6 6 0 016.800 15z" fill="#2ba24c" /><circle cx="12" cy="12" r="5.700" fill="#fff" /><circle cx="12" cy="12" r="4.500" fill="#3f7ee8" /></svg></Task>
        <Task $w={48} $active><VmLogo s={24} c="#eeb211" /></Task>
        <Tray>
          <Slot $w={22}><svg width="12" height="8" viewBox="0 0 12 8"><path d="M1 6.500l5-5 5 5" fill="none" stroke="#fff" strokeWidth="1.200" /></svg></Slot>
          <Slot $w={27}><svg width="17" height="14" viewBox="0 0 17 14" fill="none" stroke="#fff" strokeWidth="1.100"><path d="M6 1.500h10v8H4V6M10 9.500V13M7 13h6M1 1h4v4.500H1zM3 5.500V9" /></svg></Slot>
          <Slot $w={23}><svg width="16" height="10" viewBox="0 0 16 10"><path d="M.5 1h13v7.500H.5z" fill="none" stroke="#fff" /><path d="M2 2.500h6V7H2zM14 3.500h1.500v3H14z" fill="#fff" /></svg></Slot>
          <Slot $w={22}><svg width="16" height="13" viewBox="0 0 16 13" fill="none" stroke="#fff"><path d="M.5 4.500H3L6 1.500v10l-3-3H.5zM8 4.500q1.500 2 0 4M10 3q3 3.500 0 7" /><path d="M12.200 1.500q4 5 0 10" stroke="#999" /></svg></Slot>
          <Clock><Fit w={43}>2:20 AM</Fit><Fit w={52}>4/21/2023</Fit></Clock>
          <Task $w={38}><svg width="18" height="18" viewBox="0 0 18 18"><path d="M1 1h16v12h-9l-3 4v-4H1z" fill="#fff" /><path d="M3.500 4h11M3.500 7h11M3.500 10h8" stroke="#37322e" strokeWidth="1.200" /></svg><Badge $x={18} $y={18}>2</Badge></Task>
          <Slot $w={8} />
        </Tray>
      </Taskbar>
      <Watermark><Fit w={157}>Activate Windows</Fit><div><Fit w={236}>Go to Settings to activate Windows.</Fit></div></Watermark>
    </Desktop>
  );
}
